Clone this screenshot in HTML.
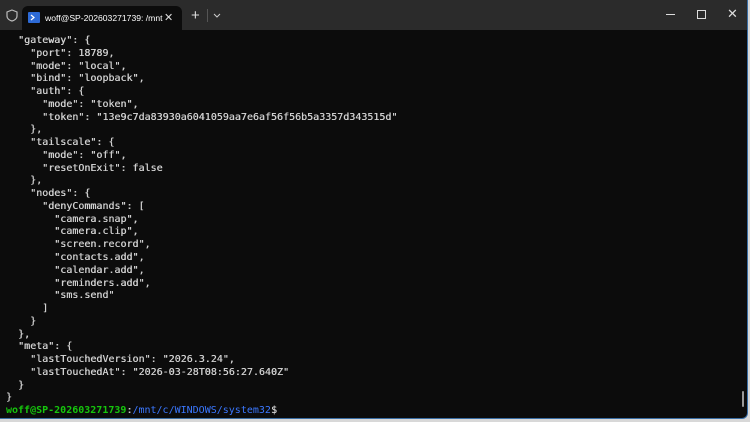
<!DOCTYPE html><html><head><style>
html,body{margin:0;padding:0;width:750px;height:422px;overflow:hidden;background:#d8d8d8}
.win{position:absolute;left:0;top:0;width:747px;height:418px;background:#0c0c0c;border-right:1px solid #3a6ea5;border-bottom:1px solid #3a6ea5;border-radius:0 0 6px 0;overflow:hidden}
.title{position:absolute;left:0;top:0;width:747px;height:30px;background:#2b2b2b}
.tab{position:absolute;left:22px;top:6px;width:160px;height:24px;background:#0c0c0c;border-radius:6px 6px 0 0;color:#fff;font:8.6px "Liberation Sans",sans-serif}
pre{position:absolute;left:6px;top:35px;margin:0;font:10px/12.76px "DejaVu Sans Mono",monospace;color:#d0d0d0;text-shadow:0.3px 0 0 #d0d0d0}
.g{color:#16c60c;font-weight:bold;text-shadow:none}.b{color:#3b78ff;text-shadow:none}
</style></head><body><div class="win">
<div class="title">
<svg style="position:absolute;left:6px;top:9px" width="12" height="13"><path d="M6 1 L11 3 V7 C11 10 8 11.5 6 12 C4 11.5 1 10 1 7 V3 Z" fill="none" stroke="#bbb" stroke-width="1.2"/></svg>
<div class="tab"><svg style="position:absolute;left:6px;top:6px" width="12" height="11"><rect width="12" height="11" rx="1" fill="#2d6ad6"/><path d="M3 3 L6 5.5 L3 8" stroke="#fff" fill="none" stroke-width="1.2"/></svg><span style="position:absolute;left:23px;top:7px">woff@SP-202603271739: /mnt</span><span style="position:absolute;left:142px;top:5px;font-size:11px;color:#ddd">✕</span></div>
<span style="position:absolute;left:191px;top:7px;color:#ddd;font:15px 'Liberation Sans',sans-serif">+</span>
<div style="position:absolute;left:207px;top:9px;width:1px;height:13px;background:#555"></div>
<svg style="position:absolute;left:213px;top:13px" width="8" height="5"><path d="M1 1 L4 4 L7 1" stroke="#ccc" fill="none"/></svg>
<div style="position:absolute;left:666px;top:14px;width:9px;height:1px;background:#ddd"></div>
<div style="position:absolute;left:697px;top:10px;width:7px;height:7px;border:1px solid #ddd"></div>
<span style="position:absolute;left:727px;top:6px;color:#ddd;font:13px 'Liberation Sans',sans-serif">✕</span>
</div>
<pre>  "gateway": {
    "port": 18789,
    "mode": "local",
    "bind": "loopback",
    "auth": {
      "mode": "token",
      "token": "13e9c7da83930a6041059aa7e6af56f56b5a3357d343515d"
    },
    "tailscale": {
      "mode": "off",
      "resetOnExit": false
    },
    "nodes": {
      "denyCommands": [
        "camera.snap",
        "camera.clip",
        "screen.record",
        "contacts.add",
        "calendar.add",
        "reminders.add",
        "sms.send"
      ]
    }
  },
  "meta": {
    "lastTouchedVersion": "2026.3.24",
    "lastTouchedAt": "2026-03-28T08:56:27.640Z"
  }
}
<span class="g">woff@SP-202603271739</span>:<span class="b">/mnt/c/WINDOWS/system32</span>$</pre>
<div style="position:absolute;left:742px;top:391px;width:2px;height:16px;background:#9a9a9a;border-radius:1px"></div>
</div></body></html>
